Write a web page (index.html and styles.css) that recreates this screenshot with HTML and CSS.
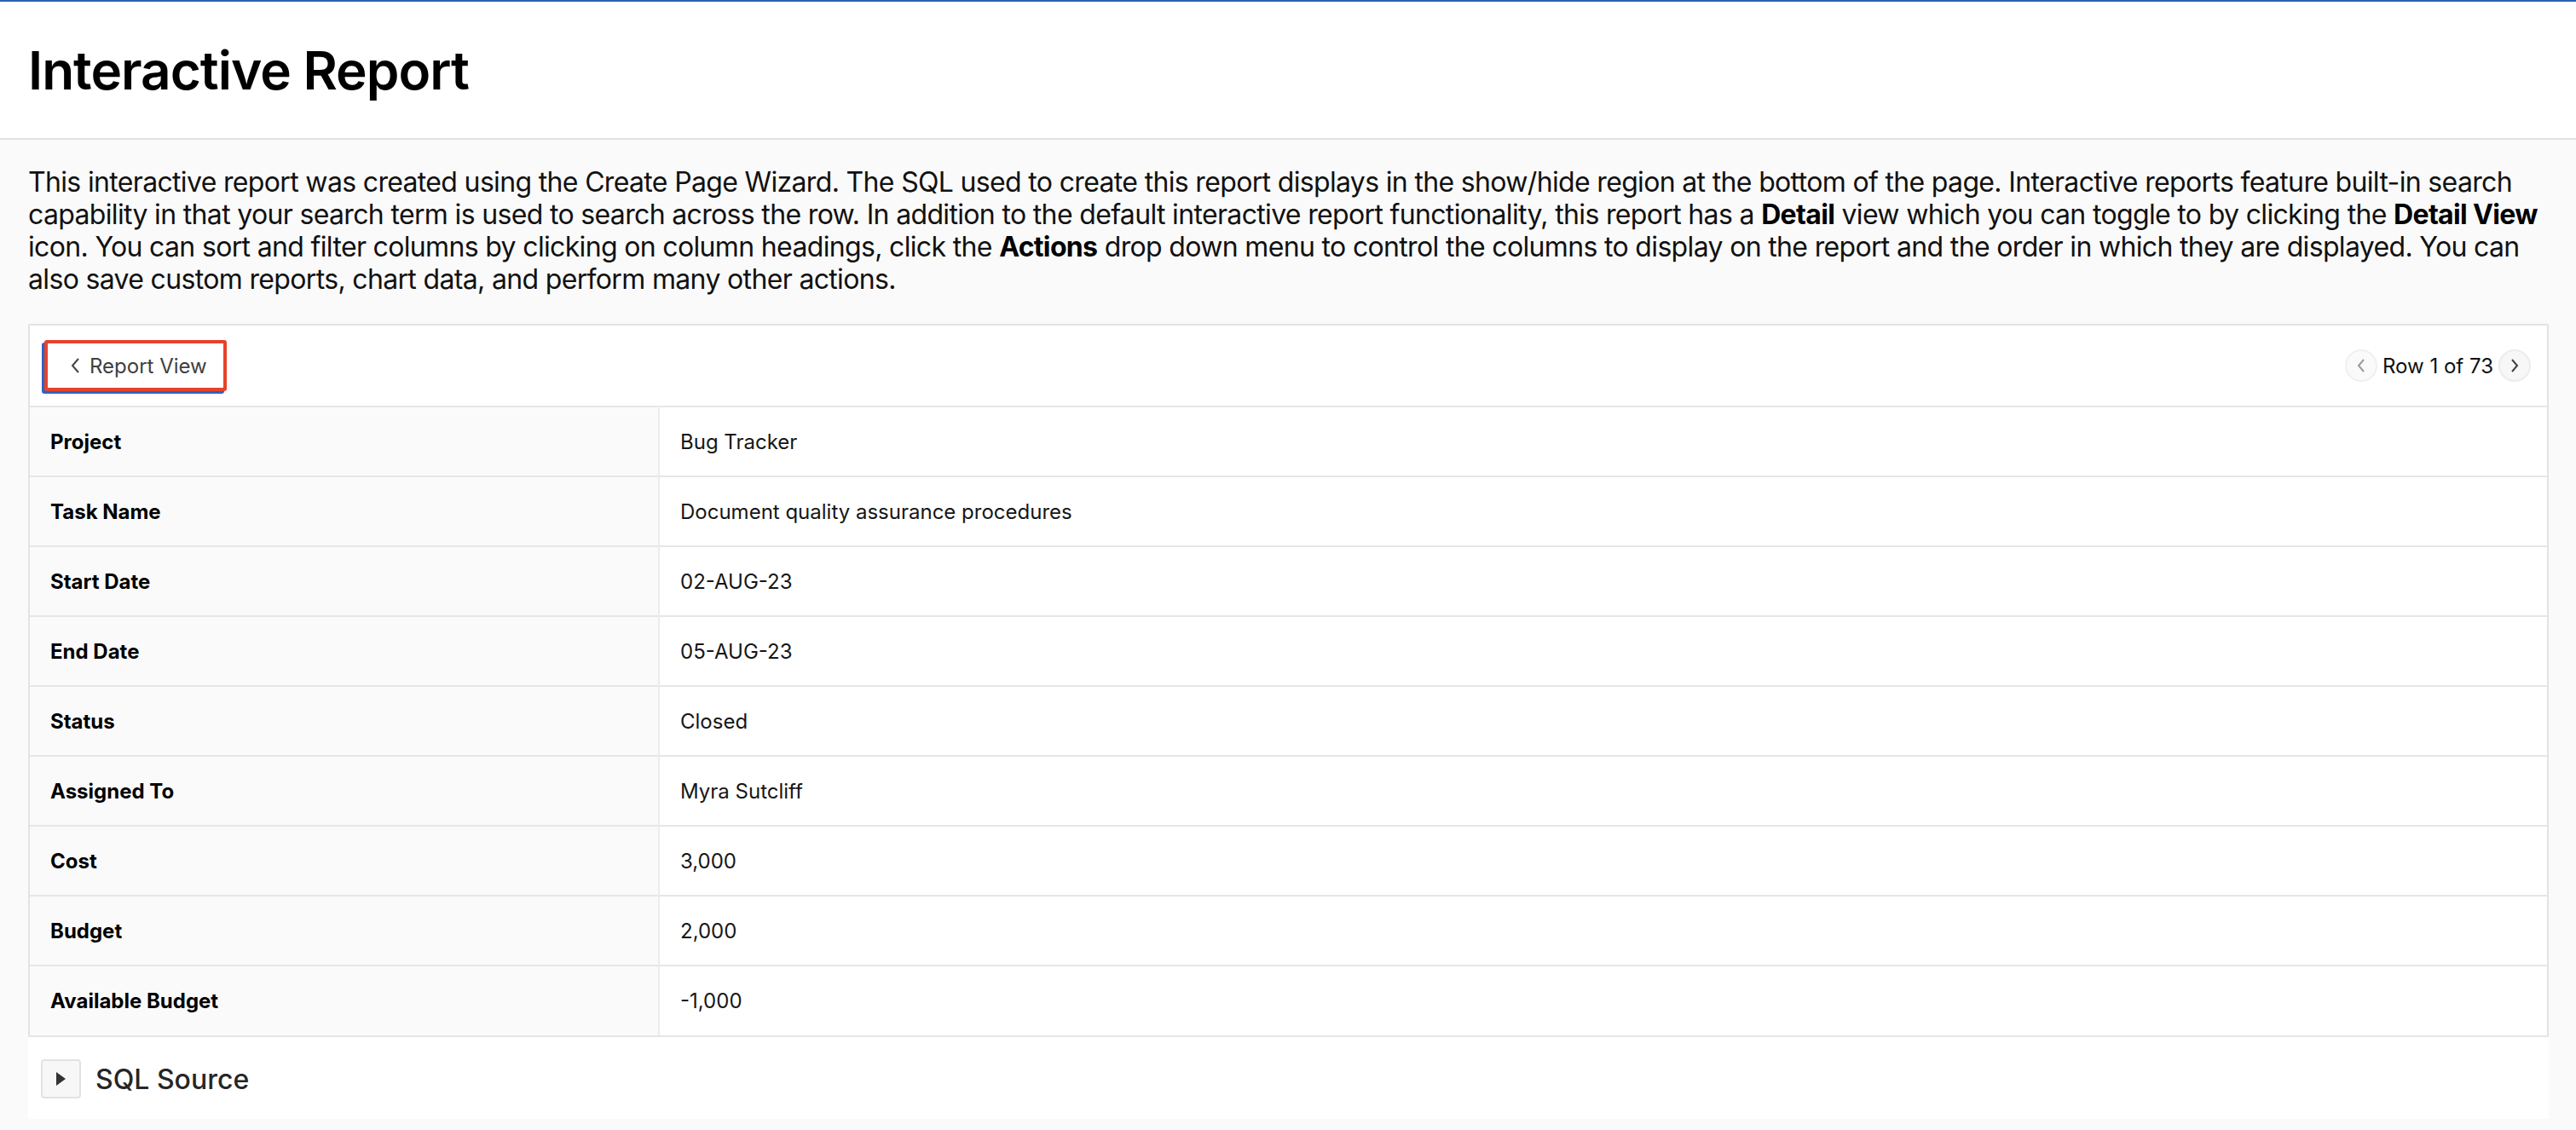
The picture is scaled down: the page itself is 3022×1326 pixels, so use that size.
FILE: index.html
```html
<!DOCTYPE html>
<html lang="en">
<head>
<meta charset="utf-8">
<title>Interactive Report</title>
<link rel="stylesheet" href="styles.css">
</head>
<body>
<header class="page-header">
  <h1 class="page-title">Interactive Report</h1>
</header>
<main class="content">
  <p class="intro">This interactive report was created using the Create Page Wizard. The SQL used to create this report displays in the show/hide region at the bottom of the page. Interactive reports feature built-in search capability in that your search term is used to search across the row. In addition to the default interactive report functionality, this report has a <b>Detail</b> view which you can toggle to by clicking the <b>Detail View</b> icon. You can sort and filter columns by clicking on column headings, click the <b>Actions</b> drop down menu to control the columns to display on the report and the order in which they are displayed. You can also save custom reports, chart data, and perform many other actions.</p>

  <section class="ir-panel">
    <div class="ir-toolbar">
      <button class="btn-back" type="button">
        <svg class="chev" width="12" height="18" viewBox="0 0 12 18"><polyline points="10,1 3,9 10,17" fill="none" stroke="#444" stroke-width="2"/></svg>
        <span>Report View</span>
      </button>
      <div class="pager">
        <button class="pager-btn is-disabled" type="button"><svg width="14" height="18" viewBox="0 0 14 18"><polyline points="10,2 4,9 10,16" fill="none" stroke="#9a9a9a" stroke-width="2"/></svg></button>
        <span class="pager-label">Row 1 of 73</span>
        <button class="pager-btn" type="button"><svg width="14" height="18" viewBox="0 0 14 18"><polyline points="4,2 10,9 4,16" fill="none" stroke="#404040" stroke-width="2"/></svg></button>
      </div>
    </div>
    <table class="detail-table">
      <colgroup><col class="col-label"><col></colgroup>
      <tbody>
        <tr><th>Project</th><td>Bug Tracker</td></tr>
        <tr><th>Task Name</th><td>Document quality assurance procedures</td></tr>
        <tr><th>Start Date</th><td>02-AUG-23</td></tr>
        <tr><th>End Date</th><td>05-AUG-23</td></tr>
        <tr><th>Status</th><td>Closed</td></tr>
        <tr><th>Assigned To</th><td>Myra Sutcliff</td></tr>
        <tr><th>Cost</th><td>3,000</td></tr>
        <tr><th>Budget</th><td>2,000</td></tr>
        <tr><th>Available Budget</th><td>-1,000</td></tr>
      </tbody>
    </table>
  </section>

  <section class="sql-region">
    <button class="toggle" type="button"><svg width="13" height="16" viewBox="0 0 13 16"><polygon points="1,0 12,8 1,16" fill="#333"/></svg></button>
    <h2 class="sql-title">SQL Source</h2>
  </section>
</main>
</body>
</html>
```
FILE: styles.css
```css
* { box-sizing: border-box; }

html, body {
  margin: 0;
  padding: 0;
}

body {
  background: #fafafa;
  font-family: "Inter", "Liberation Sans", sans-serif;
  color: #111;
}

.page-header {
  background: #fff;
  border-top: 2px solid #2d5fb4;
  border-bottom: 2px solid #e2e2e2;
  height: 164px;
  display: flex;
  align-items: center;
  padding: 0 33px;
}

.page-title {
  margin: 0;
  font-size: 62px;
  font-weight: 600;
  letter-spacing: -1px;
  color: #000;
}

.content {
  padding: 0 32px 0 33px;
}

.intro {
  margin: 31px 0 33px;
  font-size: 32px;
  line-height: 38px;
  letter-spacing: -0.66px;
  color: #111;
}

.intro b { font-weight: 700; color: #000; }

.ir-panel {
  background: #fff;
  border: 2px solid #e3e3e3;
  border-radius: 2px;
}

.ir-toolbar {
  height: 94px;
  display: flex;
  align-items: center;
  justify-content: space-between;
  padding: 0 19px 0 17px;
}

.btn-back {
  height: 60px;
  display: flex;
  align-items: center;
  gap: 11px;
  padding: 0 19px 0 26px;
  background: #fff;
  border: 4px solid #e5432a;
  border-radius: 3px;
  box-shadow: -3px 3px 0 0 #2e62c4;
  font-family: inherit;
  font-size: 24px;
  color: #404040;
}

.chev { display: block; }

.pager {
  display: flex;
  align-items: center;
  gap: 6px;
}

.pager-btn {
  width: 38px;
  height: 38px;
  border-radius: 50%;
  background: #f7f7f7;
  border: 2px solid #ececec;
  display: flex;
  align-items: center;
  justify-content: center;
  padding: 0;
}

.pager-btn.is-disabled { background: #fafafa; border-color: #f0f0f0; }

.pager-label {
  font-size: 24px;
  color: #111;
}

.detail-table {
  width: 100%;
  border-collapse: collapse;
  table-layout: fixed;
}

.col-label { width: 738px; }

.detail-table th,
.detail-table td {
  height: 82px;
  border-top: 2px solid #e6e6e6;
  padding: 0 24px;
  font-size: 24px;
  text-align: left;
  vertical-align: middle;
}

.detail-table th {
  background: #fafafa;
  font-weight: 700;
  color: #000;
  border-right: 2px solid #ececec;
}

.detail-table td {
  font-weight: 400;
  color: #161616;
}

.sql-region {
  background: #fff;
  height: 96px;
  display: flex;
  align-items: center;
  gap: 17px;
  padding: 2px 15px 0;
  box-shadow: 0 -2px 0 #e6e6e6;
}

.toggle {
  width: 47px;
  height: 46px;
  background: #f7f7f7;
  border: 2px solid #e2e2e2;
  border-radius: 4px;
  display: flex;
  align-items: center;
  justify-content: center;
  padding: 0;
}

.sql-title {
  margin: 0;
  font-size: 32px;
  font-weight: 500;
  color: #262626;
}
```
